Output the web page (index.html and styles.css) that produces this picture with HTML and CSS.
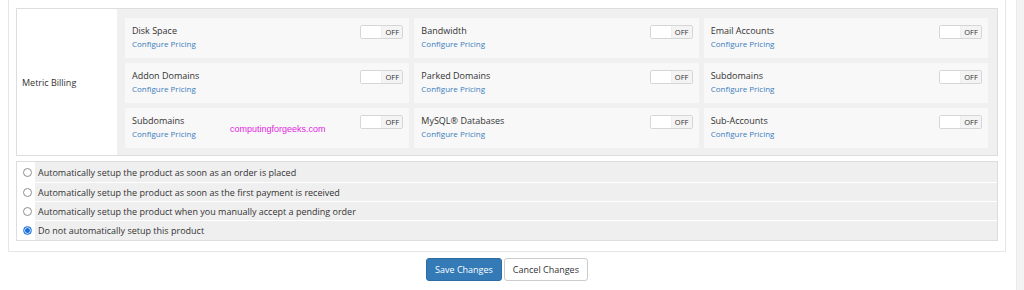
FILE: index.html
```html
<!DOCTYPE html>
<html lang="en">
<head>
<meta charset="utf-8">
<title>Product Setup</title>
<link rel="stylesheet" href="styles.css">
</head>
<body>
<div class="layout">
  <main class="page">
    <div class="panel">
      <div class="metric-table">
        <div class="metric-label">Metric Billing</div>
        <div class="metric-grid">
          <div class="card"><div class="card-text"><div class="card-title">Disk Space</div><a class="card-link" href="#">Configure Pricing</a></div><span class="toggle"><span class="toggle-knob"></span><span class="toggle-off">OFF</span></span></div>
          <div class="card"><div class="card-text"><div class="card-title">Bandwidth</div><a class="card-link" href="#">Configure Pricing</a></div><span class="toggle"><span class="toggle-knob"></span><span class="toggle-off">OFF</span></span></div>
          <div class="card"><div class="card-text"><div class="card-title">Email Accounts</div><a class="card-link" href="#">Configure Pricing</a></div><span class="toggle"><span class="toggle-knob"></span><span class="toggle-off">OFF</span></span></div>
          <div class="card"><div class="card-text"><div class="card-title">Addon Domains</div><a class="card-link" href="#">Configure Pricing</a></div><span class="toggle"><span class="toggle-knob"></span><span class="toggle-off">OFF</span></span></div>
          <div class="card"><div class="card-text"><div class="card-title">Parked Domains</div><a class="card-link" href="#">Configure Pricing</a></div><span class="toggle"><span class="toggle-knob"></span><span class="toggle-off">OFF</span></span></div>
          <div class="card"><div class="card-text"><div class="card-title">Subdomains</div><a class="card-link" href="#">Configure Pricing</a></div><span class="toggle"><span class="toggle-knob"></span><span class="toggle-off">OFF</span></span></div>
          <div class="card card-watermarked"><div class="card-text"><div class="card-title">Subdomains</div><a class="card-link" href="#">Configure Pricing</a></div><span class="watermark">computingforgeeks.com</span><span class="toggle"><span class="toggle-knob"></span><span class="toggle-off">OFF</span></span></div>
          <div class="card"><div class="card-text"><div class="card-title">MySQL® Databases</div><a class="card-link" href="#">Configure Pricing</a></div><span class="toggle"><span class="toggle-knob"></span><span class="toggle-off">OFF</span></span></div>
          <div class="card"><div class="card-text"><div class="card-title">Sub-Accounts</div><a class="card-link" href="#">Configure Pricing</a></div><span class="toggle"><span class="toggle-knob"></span><span class="toggle-off">OFF</span></span></div>
        </div>
      </div>

      <div class="radio-table">
        <label class="radio-row"><span class="radio-cell"><input type="radio" name="autosetup" class="radio"></span><span class="radio-text">Automatically setup the product as soon as an order is placed</span></label>
        <label class="radio-row"><span class="radio-cell"><input type="radio" name="autosetup" class="radio"></span><span class="radio-text">Automatically setup the product as soon as the first payment is received</span></label>
        <label class="radio-row"><span class="radio-cell"><input type="radio" name="autosetup" class="radio"></span><span class="radio-text">Automatically setup the product when you manually accept a pending order</span></label>
        <label class="radio-row"><span class="radio-cell"><input type="radio" name="autosetup" class="radio" checked></span><span class="radio-text">Do not automatically setup this product</span></label>
      </div>
    </div>

    <div class="actions">
      <button class="btn btn-primary" type="button">Save Changes</button>
      <button class="btn btn-default" type="button">Cancel Changes</button>
    </div>
  </main>
  <div class="side-strip"></div>
</div>
</body>
</html>
```

FILE: styles.css
```css
* { box-sizing: border-box; }

html, body {
  margin: 0;
  padding: 0;
  background: #ffffff;
  height: 290px;
  overflow: hidden;
}

body {
  font-family: "Open Sans", "DejaVu Sans", sans-serif;
  color: #333333;
  font-size: 9px;
}

.layout {
  display: flex;
  height: 290px;
}

.page {
  flex: 1;
  padding: 0 10px 0 8px;
}

.side-strip {
  width: 8px;
  background: #f3f3f3;
  border-left: 1px solid #e9e9e9;
}

.panel {
  border: 1px solid #e6e6e6;
  border-top: none;
  padding: 8px 7px 10px 7px;
}

/* Metric billing table */
.metric-table {
  display: grid;
  grid-template-columns: 100px 1fr;
  border: 1px solid #dddddd;
}

.metric-label {
  background: #ffffff;
  display: flex;
  align-items: center;
  padding-left: 5px;
  font-size: 9px;
  color: #333;
}

.metric-grid {
  background: #f0f0f0;
  padding: 9px 9px 7px 8px;
  display: grid;
  grid-template-columns: repeat(3, 1fr);
  gap: 5px;
}

.card {
  background: #f8f8f8;
  height: 40px;
  padding: 7px 6px 0 7px;
  display: flex;
  justify-content: space-between;
  align-items: flex-start;
  position: relative;
}

.card-text {
  display: flex;
  flex-direction: column;
}

.card-title {
  font-size: 9px;
  line-height: 12px;
  color: #333333;
}

.card-link {
  font-size: 8px;
  line-height: 13px;
  color: #3a7dbd;
  text-decoration: none;
}

.toggle {
  display: flex;
  width: 43px;
  height: 14px;
  border: 1px solid #d6d6d6;
  border-radius: 2px;
  overflow: hidden;
  background: #ffffff;
}

.toggle-knob {
  width: 21px;
  background: #ffffff;
  border-right: 1px solid #eeeeee;
}

.toggle-off {
  flex: 1;
  background: #f4f4f4;
  font-size: 7.5px;
  line-height: 12px;
  color: #333333;
  text-align: center;
}

.watermark {
  position: absolute;
  left: 105px;
  top: 16px;
  font-family: "Liberation Sans", Arial, sans-serif;
  font-size: 9px;
  color: #e21fe2;
}

/* Radio table */
.radio-table {
  margin-top: 5px;
  border: 1px solid #dddddd;
  display: flex;
  flex-direction: column;
}

.radio-row {
  display: grid;
  grid-template-columns: 18px 1fr;
  height: 19px;
  border-top: 1px solid #ffffff;
}

.radio-row:first-child {
  border-top: none;
  height: 20px;
}

.radio-row:last-child {
  height: 20px;
}

.radio-cell {
  background: #ffffff;
  display: flex;
  align-items: center;
  justify-content: center;
}

.radio {
  -webkit-appearance: none;
  appearance: none;
  margin: 0 0 0 2px;
  width: 9px;
  height: 9px;
  border-radius: 50%;
  border: 1px solid #8f8f8f;
  background: #ffffff;
}

.radio:checked {
  border-color: #2f7de1;
  background: radial-gradient(circle, #1d6fd8 0 2px, #bcd8fa 2.6px 3px, #3d86e6 3.6px);
}

.radio-text {
  background: #efefef;
  display: flex;
  align-items: center;
  padding-left: 3px;
  font-size: 9px;
  color: #333333;
}

/* Buttons */
.actions {
  display: flex;
  justify-content: center;
  gap: 2px;
  margin-top: 6px;
}

.btn {
  font-family: "Open Sans", "DejaVu Sans", sans-serif;
  font-size: 9px;
  height: 23px;
  border-radius: 3px;
  padding: 0 8px;
  cursor: pointer;
}

.btn-primary {
  background: #337ab7;
  border: 1px solid #2e6da4;
  color: #ffffff;
}

.btn-default {
  background: #ffffff;
  border: 1px solid #cccccc;
  color: #333333;
}
```
